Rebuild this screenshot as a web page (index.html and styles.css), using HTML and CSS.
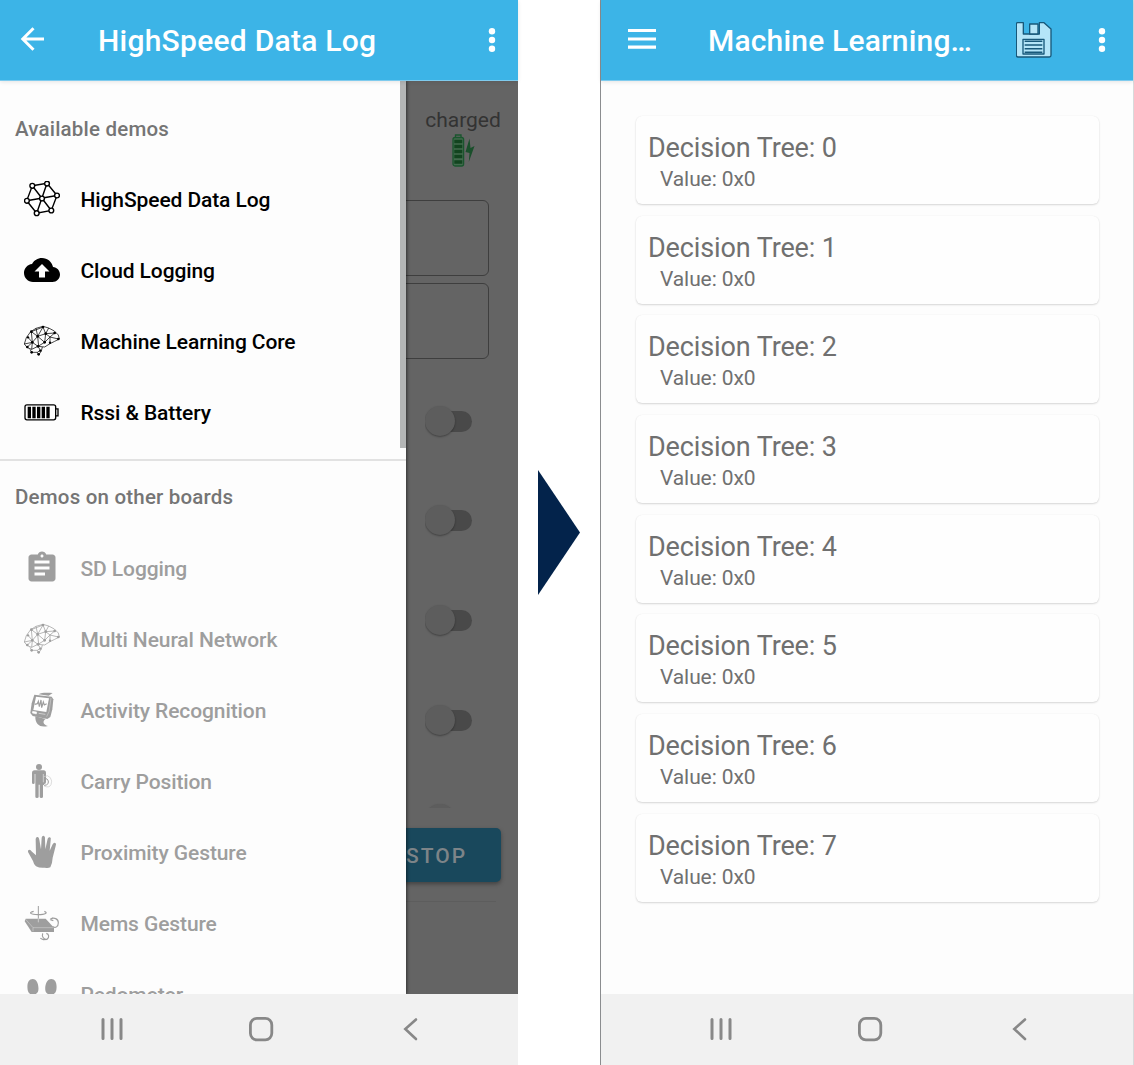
FILE: index.html
```html
<!DOCTYPE html>
<html lang="en">
<head>
<meta charset="utf-8">
<title>HighSpeed Data Log</title>
<link rel="stylesheet" href="styles.css">
</head>
<body>
<svg width="0" height="0" class="defs">
  <symbol id="brain" viewBox="42 40 108 108">
    <g fill="none" stroke="currentColor" stroke-width="2.2" stroke-linejoin="round">
      <path d="M99 50 78 56 62 66 49 84 43 103 52 114 65 119 84 110 104 112 120 102 134 95 148 88 145 76 133 64 116 55Z"/>
      <path d="M64 66 99 52 83 80 64 66 67 98 54 83M83 80 67 98 52 112M83 80 104 98 84 110 67 98M99 52 107 72 83 80M107 72 134 70 120 82 107 72 104 98 120 82 145 88M120 82 120 102M43 103 67 98 65 119M78 56 83 80 86 110M116 55 107 72"/>
      <path d="M60 119 65 128 82 128 86 136 94 124 97 112M84 110 91 122 82 128"/>
    </g>
    <g fill="currentColor">
      <circle cx="99" cy="52" r="4"/><circle cx="64" cy="66" r="4"/><circle cx="107" cy="72" r="4"/><circle cx="134" cy="70" r="4"/><circle cx="54" cy="83" r="3.5"/><circle cx="83" cy="80" r="4"/><circle cx="145" cy="88" r="4"/><circle cx="67" cy="98" r="4"/><circle cx="104" cy="98" r="4"/><circle cx="120" cy="99" r="3.5"/><circle cx="52" cy="112" r="4"/><circle cx="84" cy="110" r="4"/><circle cx="65" cy="128" r="4"/><circle cx="91" cy="123" r="3.5"/><circle cx="86" cy="134" r="4"/>
    </g>
  </symbol>
  <symbol id="dots" viewBox="0 0 12 36">
    <circle cx="6" cy="9.3" r="3.2"/><circle cx="6" cy="18" r="3.2"/><circle cx="6" cy="26.8" r="3.2"/>
  </symbol>
  <symbol id="recents" viewBox="0 0 36 36"><path d="M8 8.5v19M17 8.5v19M26 8.5v19" fill="none" stroke="currentColor" stroke-width="3" stroke-linecap="round"/></symbol>
  <symbol id="home" viewBox="0 0 36 36"><rect x="6.4" y="7.4" width="21.4" height="21.4" rx="6.5" fill="none" stroke="currentColor" stroke-width="2.8"/></symbol>
  <symbol id="back" viewBox="0 0 36 36"><path d="M23 8.5 12.3 18 23 28" fill="none" stroke="currentColor" stroke-width="2.6" stroke-linecap="round"/></symbol>
</svg>

<main class="stage">
  <section class="phone phone-log">
    <header class="appbar">
      <svg class="lead" viewBox="0 0 28 28"><path d="M25 14H4M14.5 3.3 3.8 14 14.5 24.7" fill="none" stroke="#fff" stroke-width="3"/></svg>
      <h1 class="title title-log">HighSpeed Data Log</h1>
      <svg class="dots"><use href="#dots"/></svg>
    </header>
    <div class="body">
      <div class="page">
        <div class="charge">
          <span>charged</span>
          <svg viewBox="0 0 24 34" width="24" height="34"><rect x="2" y="3.5" width="10.6" height="28.5" rx="2" fill="#436b4e" stroke="#1a562e" stroke-width="1.3"/><path d="M4.5 3V1h5.5v2" fill="none" stroke="#1a562e" stroke-width="1.3"/><path d="M3.3 7.6h8M3.3 12.6h8M3.3 17.6h8M3.3 22.6h8M3.3 28h8" stroke="#12441f" stroke-width="3.5"/><path d="M18.5 4.5 14.5 18l4 1-.7 9L23.5 12l-4 2z" fill="#1a4f2b"/></svg>
        </div>
        <div class="field"></div>
        <div class="field"></div>
        <div class="switches">
          <i class="switch"></i><i class="switch"></i><i class="switch"></i><i class="switch"></i>
          <i class="switch"></i>
        </div>
        <div class="stop">STOP</div>
        <div class="rule"></div>
      </div>
      <nav class="drawer">
        <h2>Available demos</h2>
        <ul>
          <li><svg viewBox="0 0 36 36"><g fill="#fff" stroke="currentColor" stroke-width="1.4"><path d="M8.3 4.8 23 2.2 33 14.5 27.3 29.5 12.7 32.2 2.7 19.8ZM8.3 4.8 27.3 29.5M23 2.2 12.7 32.2M33 14.5 2.7 19.8"/><circle cx="8.3" cy="4.8" r="2.4"/><circle cx="23" cy="2.6" r="2.4"/><circle cx="33" cy="14.5" r="2.4"/><circle cx="27.3" cy="29.5" r="2.4"/><circle cx="12.7" cy="32.2" r="2.4"/><circle cx="2.9" cy="19.8" r="2.4"/><circle cx="18" cy="17.5" r="2.4"/></g></svg><span>HighSpeed Data Log</span></li>
          <li><svg viewBox="0 0 24 24"><path d="M19.35 10.04C18.67 6.59 15.64 4 12 4 9.11 4 6.6 5.64 5.35 8.04 2.34 8.36 0 10.91 0 14c0 3.31 2.69 6 6 6h13c2.76 0 5-2.24 5-5 0-2.64-2.05-4.78-4.65-4.96zM14 13v4h-4v-4H7l5-5 5 5h-3z"/></svg><span>Cloud Logging</span></li>
          <li><svg class="brain"><use href="#brain"/></svg><span>Machine Learning Core</span></li>
          <li><svg viewBox="72 461.5 108 108"><rect x="75" y="494" width="92" height="45" rx="6" fill="none" stroke="currentColor" stroke-width="4"/><path d="M167 506h7v21h-7" fill="none" stroke="currentColor" stroke-width="4"/><path d="M88 500v34M102 500v34M116 500v34M130 500v34M144 500v34" stroke="currentColor" stroke-width="10"/></svg><span>Rssi &amp; Battery</span></li>
        </ul>
        <h2 class="other">Demos on other boards</h2>
        <ul class="disabled">
          <li><svg viewBox="0 0 24 24"><path d="M19 3h-4.18C14.4 1.84 13.3 1 12 1c-1.3 0-2.4.84-2.82 2H5c-1.1 0-2 .9-2 2v14c0 1.1.9 2 2 2h14c1.1 0 2-.9 2-2V5c0-1.1-.9-2-2-2zm-7 0c.55 0 1 .45 1 1s-.45 1-1 1-1-.45-1-1 .45-1 1-1zm2 14H7v-2h7v2zm3-4H7v-2h10v2zm0-4H7V7h10v2z"/></svg><span>SD Logging</span></li>
          <li><svg class="brain"><use href="#brain"/></svg><span>Multi Neural Network</span></li>
          <li><svg viewBox="72 456 108 108"><path d="M116 463C126 456 144 458 158 459L146 467ZM106 529 137 537C127 543 128 554 144 558 122 564 105 555 106 529Z"/><path d="M103 464 155 470 160 478 157 508 151 531 142 537 98 528 91 519 95 490Z"/><path d="M108 470 147 475 139 516 100 510Z" fill="#fff"/><path d="M104 493 112 491 115 484 118 500 123 480 125 503 130 486 133 495 140 491" fill="none" stroke="currentColor" stroke-width="3.5"/><path d="M98 514 110 516 109 522 97 519ZM116 520 136 523" fill="#fff" stroke="#fff" stroke-width="1.5"/><path d="M153 474 147 515 140 530" stroke="#ddd" stroke-width="1.5" fill="none"/></svg><span>Activity Recognition</span></li>
          <li><svg viewBox="72 39 108 108"><circle cx="117" cy="51" r="9"/><path d="M104 61h27q7 0 7 8v27q0 6-5 6h-4v38q0 4-5 4t-5-4v-36h-3v36q0 4-5 4t-5-4V72h-2v26q0 4-4 4t-4-4V69q0-8 8-8Z"/><path d="M131 80q13-7 20 3t2 21-21 4" fill="none" stroke="#ccc" stroke-width="2"/><path d="M133 86q10-2 12 7t-6 12-10-3" fill="none" stroke="currentColor" stroke-width="3"/><path d="M130 72v25" stroke="#fff" stroke-width="1.5"/></svg><span>Carry Position</span></li>
          <li><svg viewBox="72 252 108 108"><path d="M108 349Q101 343 99 333L84 306Q82 300 88 299 92 299 96 305L108 316 107 267Q108 260 113 261 117 262 118 269L123 298 125 263Q127 256 132 258 136 260 135 267L136 298 143 266Q145 260 150 262 154 264 152 271L149 302 158 283Q161 277 166 279 170 281 167 288L158 323Q157 341 151 352 143 356 135 353 120 355 108 349Z"/></svg><span>Proximity Gesture</span></li>
          <li><svg viewBox="72 465 108 108"><path d="M77 506 137 506 162 533 162 546 95 546 74 514Z"/><path d="M77 508 99 533H161M99 533V544" fill="none" stroke="#ddd" stroke-width="1.5"/><path d="M115 468V506" stroke="currentColor" stroke-width="3"/><path d="M101 484C84 488 91 493 114 494 137 494 145 488 133 484M151 508C162 500 175 507 175 518 175 530 166 536 158 529M160 512l-8-3 6-6M128 550C124 562 133 569 141 568 149 562 147 552 139 550M121 565l9 4 12-1" fill="none" stroke="currentColor" stroke-width="3.5"/><path d="M115 506V517" stroke="#ccc" stroke-width="3"/></svg><span>Mems Gesture</span></li>
          <li><svg viewBox="72 678 108 108"><path d="M98 687C112 687 117 707 115 721 113 737 87 741 83 720 80 700 86 687 98 687ZM154 687C140 687 134 707 136 721 138 737 165 741 169 720 172 700 166 687 154 687Z"/></svg><span>Pedometer</span></li>
        </ul>
        <div class="scrollbar"></div>
      </nav>
    </div>
    <footer class="navbar">
      <svg><use href="#recents"/></svg><svg><use href="#home"/></svg><svg><use href="#back"/></svg>
    </footer>
  </section>

  <svg class="arrow" viewBox="0 0 42 125"><path d="M0 0 42 62.5 0 125Z" fill="#03234b"/></svg>

  <section class="phone phone-mlc">
    <header class="appbar">
      <svg class="lead" viewBox="0 0 28 28"><path d="M0 5.5h28M0 14h28M0 22.2h28" stroke="#fff" stroke-width="3.2"/></svg>
      <h1 class="title title-mlc">Machine Learning…</h1>
      <svg class="save" viewBox="48 34 108 108"><g fill="#b4e5f8" stroke="#17587a" stroke-width="4" stroke-linejoin="round"><path d="M53 36H70V70H118V36H132L153 55V134Q153 139 148 139H54Q49 139 49 134V40Q49 36 53 36Z"/><path d="M89 40H114V70H89Z"/><path d="M69 86H132V130H69Z"/></g><path d="M74 92H127M74 103H127M74 114H127M74 125H127" stroke="#17587a" stroke-width="4.6"/></svg>
      <svg class="dots"><use href="#dots"/></svg>
    </header>
    <div class="body cards">
      <article class="card"><h3>Decision Tree: 0</h3><p>Value: 0x0</p></article>
      <article class="card"><h3>Decision Tree: 1</h3><p>Value: 0x0</p></article>
      <article class="card"><h3>Decision Tree: 2</h3><p>Value: 0x0</p></article>
      <article class="card"><h3>Decision Tree: 3</h3><p>Value: 0x0</p></article>
      <article class="card"><h3>Decision Tree: 4</h3><p>Value: 0x0</p></article>
      <article class="card"><h3>Decision Tree: 5</h3><p>Value: 0x0</p></article>
      <article class="card"><h3>Decision Tree: 6</h3><p>Value: 0x0</p></article>
      <article class="card"><h3>Decision Tree: 7</h3><p>Value: 0x0</p></article>
    </div>
    <footer class="navbar">
      <svg><use href="#recents"/></svg><svg><use href="#home"/></svg><svg><use href="#back"/></svg>
    </footer>
  </section>
</main>
</body>
</html>
```
FILE: styles.css
```css
* { box-sizing: border-box; }
body { margin: 0; background: #fff; font-family: Roboto, "Liberation Sans", sans-serif; }
h1, h2, h3, p, ul { margin: 0; padding: 0; font-weight: 400; }
ul { list-style: none; }
svg { display: block; flex: none; fill: currentColor; }
.defs { position: absolute; }

.stage { display: flex; width: 1134px; height: 1065px; align-items: center; overflow: hidden; }
.phone { display: flex; flex-direction: column; height: 1065px; flex: none; }
.phone-log { width: 518px; }
.phone-mlc { width: 534px; border-left: 1px solid #8b8d8f; border-right: 1px solid #d8dadb; }
.arrow { width: 42px; height: 125px; margin: 0 20px; }

.appbar { display: flex; align-items: center; height: 81px; flex: none; background: #3cb4e7; color: #fff; padding-left: 19px; padding-bottom: 2px; border-bottom: 1px solid #7fcbee; position: relative; z-index: 1; box-shadow: 0 1px 4px rgba(0, 0, 0, .1); }
.phone-mlc .appbar { padding-left: 27px; }
.lead { width: 28px; height: 28px; }
.title { font-size: 30px; line-height: 40px; font-weight: 500; white-space: nowrap; padding-top: 3px; }
.title-log { margin-left: 51px; width: 388px; letter-spacing: .25px; }
.title-mlc { margin-left: 52px; width: 308px; letter-spacing: .18px; }
.dots { width: 12px; height: 36px; margin-top: 1px; }
.save { width: 36px; height: 36px; margin: 1px 44px 0 0; }

.body { position: relative; height: 913px; flex: none; overflow: hidden; background: #fdfdfd; }
.navbar { flex: 1; display: flex; align-items: center; gap: 113px; padding: 0 0 1px 95px; background: #f1f1f1; color: #888; }
.navbar svg { width: 36px; height: 36px; }
.phone-mlc .navbar { padding-left: 103px; }

.page { height: 100%; background: #646464; display: flex; flex-direction: column; align-items: flex-end; }
.charge { width: 110px; height: 119px; padding-top: 26px; display: flex; flex-direction: column; align-items: center; color: #333; font-size: 21px; line-height: 26px; }
.charge svg { margin-top: 1px; }
.field { width: 160px; height: 76px; border: 1px solid #3e3e3e; border-radius: 6px; margin: 0 29px 7px 0; }
.switches { height: 442px; flex: none; padding: 39.5px 46px 0 0; overflow: hidden; }
.switch { display: flex; align-items: center; justify-content: flex-end; width: 47px; height: 31px; margin-bottom: 68.7px; position: relative; }
.switch::before { content: ""; width: 38px; height: 21px; border-radius: 11px; background: #494949; }
.switch::after { content: ""; position: absolute; left: 0; top: 0; width: 30px; height: 30px; border-radius: 50%; background: #5d5d5d; box-shadow: 0 1px 2px rgba(0, 0, 0, .35); }
.stop { width: 160px; height: 54px; flex: none; margin: 20px 17px 0 0; padding-left: 65px; border-radius: 5px; background: #19485c; color: #7d8488; font-size: 21px; line-height: 57px; font-weight: 500; letter-spacing: 2px; box-shadow: 0 2px 4px rgba(0, 0, 0, .35); }
.rule { width: 160px; height: 1px; margin: 19px 22px 0 0; background: #5d5d5d; }

.drawer { position: absolute; inset: 0 auto 0 0; width: 406px; background: #fdfdfd; box-shadow: 1px 0 3px rgba(0, 0, 0, .5); padding-top: 35px; }
.drawer h2 { padding-left: 15px; font-size: 20.5px; line-height: 26px; font-weight: 500; color: #757575; letter-spacing: .2px; }
.drawer ul { padding-top: 22px; }
.drawer li { display: flex; align-items: center; height: 71.1px; padding-left: 24px; gap: 20.5px; font-size: 21px; font-weight: 500; letter-spacing: -.1px; color: #000; white-space: nowrap; }
.drawer li svg { width: 36px; height: 36px; margin-bottom: 1px; }
.drawer li span { padding-top: 1px; }
.drawer h2.other { border-top: 2px solid #e2e2e2; margin-top: 11px; padding-top: 23px; }
.drawer .disabled { padding-top: 22.2px; }
.drawer .disabled li { color: #9e9e9e; }
.scrollbar { position: absolute; right: 0; top: 0; width: 6px; height: 367px; background: #b4b6b6; }

.cards { display: flex; flex-direction: column; gap: 11.7px; padding: 35px 34px 0 35px; }
.card { height: 88px; flex: none; padding: 14px 12px; border-radius: 6px; background: #fefefe; box-shadow: 0 1px 2px rgba(0, 0, 0, .15), 0 0 1px rgba(0, 0, 0, .08); color: #707070; }
.card h3 { font-size: 27px; line-height: 36px; letter-spacing: -.12px; }
.card p { padding-left: 12px; font-size: 21px; line-height: 27px; letter-spacing: -.1px; }
```
